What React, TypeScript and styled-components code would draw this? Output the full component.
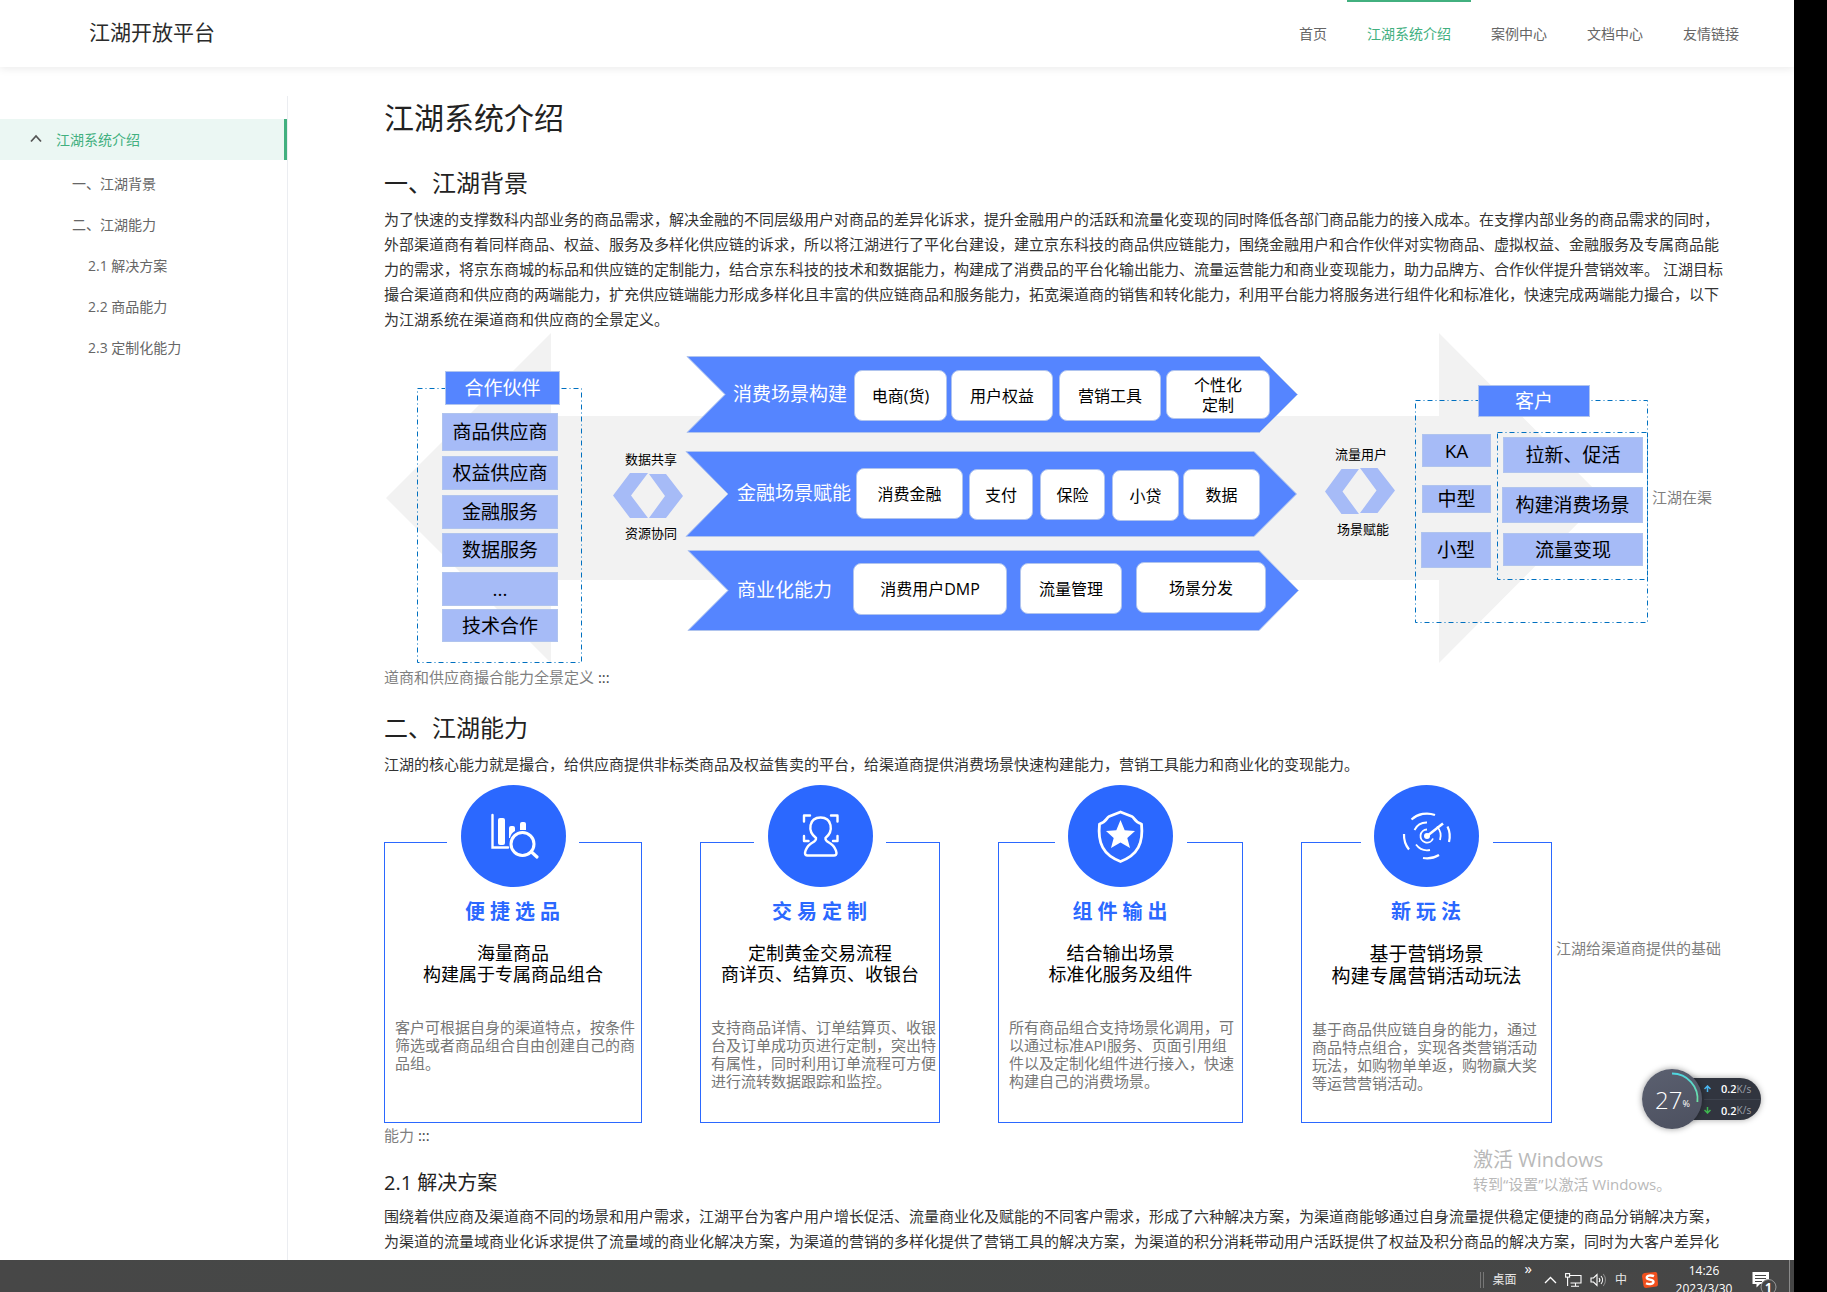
import React from 'react';
import styled, { createGlobalStyle, css } from 'styled-components';

const GREEN = '#42b07f';
const BLUE = '#5585ff';
const PALE = '#a6bbf7';
const EDGE = '#b0c4ee';
const BRAND = '#2b68ff';

const GlobalStyle = createGlobalStyle`
  * { box-sizing: border-box; }
  body {
    margin: 0;
    background: #000;
    font-family: "Open Sans", "Noto Sans CJK SC", sans-serif;
    color: #333;
  }
`;

/* ---------- page frame ---------- */

const Screen = styled.div`
  height: 100vh;
  margin-right: 33px;
  display: flex;
  flex-direction: column;
  overflow: hidden;
  position: relative;
  background: #fff;
`;

const Header = styled.header`
  flex: none;
  height: 67px;
  padding: 0 35px 0 89px;
  display: flex;
  justify-content: space-between;
  background: #fff;
  box-shadow: 0 2px 8px rgba(0, 0, 0, 0.08);
`;

const Brand = styled.a`
  font-size: 21px;
  line-height: 64px;
  color: #2b2b2b;
  text-decoration: none;
`;

const TopNav = styled.nav`
  display: flex;
`;

const TopLink = styled.a<{ $active?: boolean }>`
  padding: 0 20px;
  border-top: 2px solid ${(p) => (p.$active ? GREEN : 'transparent')};
  font-size: 14px;
  line-height: 64px;
  color: ${(p) => (p.$active ? GREEN : '#666')};
  text-decoration: none;
`;

const Body = styled.div`
  flex: 1;
  min-height: 0;
  display: flex;
`;

const Sidebar = styled.nav`
  flex: none;
  width: 288px;
  margin-top: 29px;
  padding-top: 23px;
  border-right: 1px solid #ebedf1;
`;

const SideLink = styled.a<{ $level: number }>`
  display: flex;
  align-items: center;
  height: 41px;
  padding-bottom: 2px;
  padding-left: ${(p) => 56 + p.$level * 16}px;
  font-size: 14px;
  color: #666;
  text-decoration: none;
`;

const SideActive = styled.a`
  display: flex;
  align-items: center;
  gap: 14px;
  height: 41px;
  margin-bottom: 3px;
  padding-bottom: 2px;
  padding-left: 30px;
  border-right: 3px solid ${GREEN};
  background: #ebf7f3;
  font-size: 14px;
  color: ${GREEN};
  text-decoration: none;
`;

const Content = styled.main`
  flex: 1;
  min-width: 0;
  padding: 31px 70px 0 96px;
  overflow: hidden;
`;

const H1 = styled.h1`
  margin: 0 0 28px;
  font-size: 30px;
  font-weight: 400;
  line-height: 40px;
  color: #222;
`;

const H2 = styled.h2`
  margin: 21px 0 7px;
  font-size: 24px;
  font-weight: 400;
  line-height: 34px;
  color: #222;
`;

const H3 = styled.h3`
  margin: 21px 0 7px;
  font-size: 20px;
  font-weight: 400;
  line-height: 28px;
  color: #222;
`;

const Text = styled.p<{ $muted?: boolean }>`
  margin: 0;
  font-size: 15px;
  line-height: 25px;
  color: ${(p) => (p.$muted ? '#7f7f7f' : '#333')};
`;

const Mark = styled.span`
  color: #444;
`;

/* ---------- panorama diagram ---------- */

const Canvas = styled.span`
  position: relative;
  display: inline-block;
  vertical-align: middle;
  width: 1264px;
  height: 333px;
  color: #000;
`;

const Shapes = styled.svg`
  display: block;
`;

interface Place {
  $x: number;
  $y: number;
  $w: number;
  $h: number;
}

const placed = css<Place>`
  position: absolute;
  left: ${(p) => p.$x}px;
  top: ${(p) => p.$y}px;
  width: ${(p) => p.$w}px;
  height: ${(p) => p.$h}px;
  display: flex;
  align-items: center;
  justify-content: center;
  text-align: center;
  white-space: nowrap;
`;

const Block = styled.span<Place & { $head?: boolean }>`
  ${placed}
  border: 1px solid ${EDGE};
  background: ${(p) => (p.$head ? BLUE : PALE)};
  color: ${(p) => (p.$head ? '#fff' : '#000')};
  font-size: 19px;
  line-height: 24px;
`;

const Chip = styled.span<Place>`
  ${placed}
  border: 1px solid ${EDGE};
  border-radius: 8px;
  background: #fff;
  font-size: 16px;
  line-height: 20px;
`;

const RibbonTitle = styled.span<Place>`
  ${placed}
  justify-content: flex-start;
  color: #fff;
  font-size: 19px;
`;

const Note = styled.span<Place>`
  ${placed}
  font-size: 13px;
`;

type Item = [React.ReactNode, number, number, number, number];

const heads: Item[] = [
  ['合作伙伴', 61, 39, 115, 34],
  ['客户', 1094, 53, 112, 32],
];

const blocks: Item[] = [
  ['商品供应商', 58, 81, 116, 38],
  ['权益供应商', 58, 124, 116, 34],
  ['金融服务', 58, 163, 116, 34],
  ['数据服务', 58, 201, 116, 34],
  ['...', 58, 240, 116, 34],
  ['技术合作', 58, 277, 116, 33],
  ['KA', 1038, 102, 69, 33],
  ['中型', 1038, 153, 69, 28],
  ['小型', 1037, 200, 70, 36],
  ['拉新、促活', 1119, 105, 140, 36],
  ['构建消费场景', 1118, 155, 141, 36],
  ['流量变现', 1119, 201, 140, 33],
];

const chips: Item[] = [
  ['电商(货)', 470, 38, 93, 51],
  ['用户权益', 567, 38, 102, 51],
  ['营销工具', 675, 38, 102, 51],
  [<>个性化<br />定制</>, 782, 38, 104, 49],
  ['消费金融', 472, 136, 107, 51],
  ['支付', 585, 137, 64, 51],
  ['保险', 656, 137, 65, 51],
  ['小贷', 728, 138, 67, 51],
  ['数据', 799, 137, 77, 51],
  ['消费用户DMP', 469, 231, 154, 52],
  ['流量管理', 636, 231, 102, 51],
  ['场景分发', 752, 230, 130, 51],
];

const titles: Item[] = [
  ['消费场景构建', 349, 50, 120, 24],
  ['金融场景赋能', 353, 149, 120, 24],
  ['商业化能力', 353, 246, 120, 24],
];

const notes: Item[] = [
  ['数据共享', 237, 117, 60, 20],
  ['资源协同', 237, 191, 60, 20],
  ['流量用户', 947, 112, 60, 20],
  ['场景赋能', 949, 187, 60, 20],
];

const draw = (Part: React.ElementType, items: Item[], extra: object = {}) =>
  items.map(([label, x, y, w, h], i) => (
    <Part key={i} $x={x} $y={y} $w={w} $h={h} {...extra}>
      <span>{label}</span>
    </Part>
  ));

const Panorama = () => (
  <Canvas>
    <Shapes width="1264" height="332" viewBox="0 0 1264 332" aria-hidden="true">
      <path
        d="M2 166 L167 1 V84 H1055 V1 L1219 166 L1055 331 V248 H167 V331 Z"
        fill="#f2f2f2"
      />
      <g fill="none" stroke="#0070c0" strokeDasharray="5 3 1 3">
        <rect x="33.5" y="56.5" width="164" height="274" />
        <rect x="1031.5" y="68.5" width="232" height="222" />
        <rect x="1113.5" y="100.5" width="150" height="147" />
      </g>
      <g fill={BLUE} stroke={EDGE}>
        <path d="M303 24.5 H875.5 L913.5 62.5 L875.5 100.5 H303 L341 62.5 Z" />
        <path d="M302 119.5 H870 L912.5 162 L870 204.5 H302 L344 162 Z" />
        <path d="M304 218.5 H875 L914.5 258.5 L875 298.5 H304 L344 258.5 Z" />
      </g>
      <g fill={PALE}>
        <path d="M229 163.5 L246 141 H264 L247 163.5 L264 186 H246 Z" />
        <path d="M265 142 H282 L299 164 L282 186 H265 L281 164 Z" />
        <path d="M941 159.5 L957.5 137 H975 L958.5 159.5 L975 182 H957.5 Z" />
        <path d="M976 136 H993.5 L1011 158.5 L993.5 181 H976 L992.5 158.5 Z" />
      </g>
    </Shapes>
    {draw(Block, heads, { $head: true })}
    {draw(Block, blocks)}
    {draw(RibbonTitle, titles)}
    {draw(Chip, chips)}
    {draw(Note, notes)}
  </Canvas>
);

/* ---------- ability cards ---------- */

const Cards = styled.span`
  display: inline-grid;
  grid-template-columns: 258px 240px 245px 251px;
  column-gap: 58px;
  vertical-align: middle;
  padding-top: 65px;
`;

const Card = styled.span`
  min-height: 281px;
  display: flex;
  flex-direction: column;
  align-items: center;
  border: 1px solid ${BRAND};
`;

const BadgeSlot = styled.span`
  width: 132px;
  margin-top: -58px;
  display: flex;
  justify-content: center;
  background: #fff;
`;

const Badge = styled.svg`
  display: block;
  width: 105px;
  height: 102px;
`;

const CardTitle = styled.strong`
  margin-top: 12px;
  padding-left: 4px;
  font-size: 20px;
  line-height: 26px;
  letter-spacing: 5px;
  color: ${BRAND};
`;

const CardLead = styled.span<{ $large?: boolean }>`
  margin-top: 18px;
  font-size: ${(p) => (p.$large ? 19 : 18)}px;
  line-height: ${(p) => (p.$large ? 22 : 21)}px;
  text-align: center;
  white-space: nowrap;
  color: #000;
`;

const CardText = styled.span`
  align-self: stretch;
  margin-top: 33px;
  padding: 0 2px 0 10px;
  font-size: 15px;
  line-height: 18px;
  color: #777;
`;

const ChartIcon = () => (
  <>
    <g fill="none" stroke="#fff" strokeWidth="2.4" strokeLinecap="round">
      <path d="M31.5 30 V62.5 H47" />
      <circle cx="61.5" cy="59" r="11.5" strokeWidth="3" />
      <path d="M70.5 67 L76 72" strokeWidth="3.2" />
    </g>
    <rect x="37" y="33" width="7" height="27" rx="2" fill="#fff" />
    <path d="M48 43 a2 2 0 0 1 2 -2 h2 a2 2 0 0 1 2 2 v3 q-4 2 -5 7 h-1 Z" fill="#fff" />
    <path d="M59 39 a2 2 0 0 1 2 -2 h2 a2 2 0 0 1 2 2 v6 h-6 Z" fill="#fff" />
  </>
);

const PersonIcon = () => (
  <g fill="none" stroke="#fff" strokeWidth="2.4" strokeLinecap="round" strokeLinejoin="round">
    <path d="M36 36.500 V30.500 H42" />
    <path d="M63 30.500 H69.500 V36.500" />
    <path d="M36 51 V56 H40.500" />
    <path d="M69.500 51 V56 H65" />
    <path d="M48 53 C39 46 41 32.500 52.600 32.500 C64 32.500 66 46 57.500 53 C57 56 60 57 62.500 58.500 C66 61 68 65 68.500 68 Q68.500 70.500 66 70.500 H39.500 Q37 70.500 37 68 C37.500 65 39.500 61 43 58.500 C45.500 57 48.500 56 48 53 Z" />
  </g>
);

const ShieldIcon = () => (
  <>
    <path
      d="M52.500 27 L64 31.500 C66.500 32.500 66 37 73.500 39 C75.500 58 70 70 52.500 76.500 C35 70 29.500 58 31.500 39 C39 37 38.500 32.500 41 31.500 Z"
      fill="none"
      stroke="#fff"
      strokeWidth="2.8"
      strokeLinejoin="round"
    />
    <path
      d="M52.500 35 L56.700 45.300 L67 46 L59.300 53 L62 63 L52.500 57.600 L43 63 L45.700 53 L38 46 L48.300 45.300 Z"
      fill="#fff"
    />
  </>
);

const RadarIcon = () => (
  <>
    <g fill="none" stroke="#fff" strokeWidth="2.2">
      <path d="M37.500 34.500 A23 23 0 0 1 61 30" />
      <path d="M73.500 41.500 A23 23 0 0 1 75 57" />
      <path d="M65 70 A23 23 0 0 1 49 73" />
      <path d="M30 49 A23 23 0 0 0 35 64.500" />
      <path d="M40.500 45 A13.500 13.500 0 0 1 53 37.500" strokeWidth="1.800" />
      <path d="M63 41.500 A14 14 0 0 1 66 55" strokeWidth="1.800" />
      <path d="M42 59.500 A14 14 0 0 0 56 65" strokeWidth="1.800" />
      <path d="M53 44.500 A6.500 6.500 0 1 0 59 53.500" strokeWidth="1.800" />
      <path d="M53 51 L69 38.500" strokeWidth="2.600" />
    </g>
    <circle cx="53" cy="51" r="3" fill="#fff" />
  </>
);

interface CardData {
  title: string;
  lead: [string, string];
  text: string;
  icon: React.ReactNode;
  large?: boolean;
}

const cards: CardData[] = [
  {
    title: '便捷选品',
    lead: ['海量商品', '构建属于专属商品组合'],
    text: '客户可根据自身的渠道特点，按条件筛选或者商品组合自由创建自己的商品组。',
    icon: <ChartIcon />,
  },
  {
    title: '交易定制',
    lead: ['定制黄金交易流程', '商详页、结算页、收银台'],
    text: '支持商品详情、订单结算页、收银台及订单成功页进行定制，突出特有属性，同时利用订单流程可方便进行流转数据跟踪和监控。',
    icon: <PersonIcon />,
  },
  {
    title: '组件输出',
    lead: ['结合输出场景', '标准化服务及组件'],
    text: '所有商品组合支持场景化调用，可以通过标准API服务、页面引用组件以及定制化组件进行接入，快速构建自己的消费场景。',
    icon: <ShieldIcon />,
  },
  {
    title: '新玩法',
    lead: ['基于营销场景', '构建专属营销活动玩法'],
    text: '基于商品供应链自身的能力，通过商品特点组合，实现各类营销活动玩法，如购物单单返，购物赢大奖等运营营销活动。',
    icon: <RadarIcon />,
    large: true,
  },
];

const Abilities = () => (
  <Cards>
    {cards.map((c) => (
      <Card key={c.title}>
        <BadgeSlot>
          <Badge viewBox="0 0 105 102" aria-hidden="true">
            <ellipse cx="52.5" cy="51" rx="52.5" ry="51" fill={BRAND} />
            {c.icon}
          </Badge>
        </BadgeSlot>
        <CardTitle>{c.title}</CardTitle>
        <CardLead $large={c.large}>
          {c.lead[0]}
          <br />
          {c.lead[1]}
        </CardLead>
        <CardText>{c.text}</CardText>
      </Card>
    ))}
  </Cards>
);

/* ---------- desktop overlays ---------- */

const Monitor = styled.aside`
  position: absolute;
  right: 33px;
  bottom: 163px;
  display: flex;
  align-items: center;
`;

const Gauge = styled.div`
  position: relative;
  z-index: 1;
  width: 60px;
  height: 60px;
  padding-left: 13px;
  display: flex;
  align-items: center;
  border-radius: 50%;
  background: linear-gradient(160deg, #5b6070, #4c505f);
  box-shadow: 0 0 6px rgba(0, 0, 0, 0.4);
  color: #fff;
  font-size: 24px;
  font-weight: 300;
`;

const Percent = styled.small`
  align-self: flex-end;
  margin-bottom: 18px;
  font-size: 9px;
  line-height: 14px;
  font-weight: 400;
`;

const Arc = styled.svg`
  position: absolute;
  inset: 0;
`;

const Rates = styled.div`
  width: 72px;
  height: 42px;
  margin-left: -13px;
  padding-left: 15px;
  border-radius: 0 21px 21px 0;
  background: #31353f;
  box-shadow: 0 0 6px rgba(0, 0, 0, 0.35);
`;

const Rate = styled.div`
  display: flex;
  align-items: center;
  height: 21px;
  color: #fff;
  font-size: 11px;
  font-weight: 600;

  & + & {
    border-top: 1px solid #3e434e;
  }

  svg {
    margin-right: 10px;
  }

  small {
    font-size: 10px;
    font-weight: 400;
    color: #9da1ab;
  }
`;

const Watermark = styled.div`
  position: absolute;
  right: 124px;
  bottom: 97px;
  width: 197px;
  color: #b9b9b9;
  white-space: nowrap;
`;

const WatermarkTitle = styled.div`
  font-size: 20px;
  line-height: 26px;
`;

const WatermarkText = styled.div`
  font-size: 15px;
  line-height: 22px;
`;

/* The bar runs on past the lower edge of the screen. */
const Taskbar = styled.footer`
  flex: none;
  height: 40px;
  margin-bottom: -8px;
  padding-right: 4px;
  position: relative;
  display: flex;
  justify-content: flex-end;
  align-items: center;
  background: linear-gradient(90deg, #474747, #454847 40%, #464646);
  color: #fff;
  font-size: 12px;
`;

const Grip = styled.span`
  width: 4px;
  height: 16px;
  margin-right: 9px;
  border: solid #777;
  border-width: 0 1px;
`;

const TrayLabel = styled.span`
  line-height: 16px;
  color: #e6e6e6;
`;

const More = styled.span`
  align-self: flex-start;
  margin: 0 12px 0 8px;
  font-size: 15px;
  line-height: 16px;
`;

const Tray = styled.div`
  display: flex;
  align-items: center;
  gap: 8px;
  margin-right: 15px;
`;

const Clock = styled.time`
  align-self: flex-start;
  width: 60px;
  margin: 2px 18px 0 16px;
  display: flex;
  flex-direction: column;
  align-items: center;
  line-height: 18px;
`;

const ShowDesktop = styled.span`
  align-self: stretch;
  width: 1px;
  margin-left: 12px;
  background: #8a8a8a;
`;

const RateArrow = ({ color, down }: { color: string; down?: boolean }) => (
  <svg width="7" height="7" viewBox="0 0 7 7" fill="none" stroke={color} strokeWidth="1.5">
    <path d={down ? 'M3.5 0 V6 M0.500 3 L3.500 6 L6.500 3' : 'M3.5 7 V1 M0.500 4 L3.500 1 L6.500 4'} />
  </svg>
);

const SpeedMonitor = () => (
  <Monitor>
    <Gauge>
      27<Percent>%</Percent>
      <Arc width="60" height="60" viewBox="0 0 60 60" fill="none" aria-hidden="true">
        <defs>
          <linearGradient id="arc" x1="0" y1="0" x2="0" y2="1">
            <stop offset="0" stopColor="#4fd6e0" />
            <stop offset="1" stopColor="#6fe0a0" />
          </linearGradient>
        </defs>
        <path d="M30 4.500 A25.500 25.500 0 0 1 55.400 33" stroke="url(#arc)" strokeWidth="1.800" />
      </Arc>
    </Gauge>
    <Rates>
      <Rate>
        <RateArrow color="#4bb6f0" />
        0.2<small>K/s</small>
      </Rate>
      <Rate>
        <RateArrow color="#3fb950" down />
        0.2<small>K/s</small>
      </Rate>
    </Rates>
  </Monitor>
);

const SystemBar = () => (
  <Taskbar>
    <Grip />
    <TrayLabel>桌面</TrayLabel>
    <More>»</More>
    <Tray>
      <svg width="13" height="8" viewBox="0 0 13 8" fill="none" stroke="#fff" strokeWidth="1.3">
        <path d="M1 7 L6.500 1.500 L12 7" />
      </svg>
      <svg width="17" height="14" viewBox="0 0 17 14" fill="none" stroke="#fff" strokeWidth="1.1">
        <path d="M5 2.500 H16 V10 H5.500 M10.500 10 V13 M6 13.200 H14" />
        <rect x="0.600" y="0.600" width="4" height="3.500" />
        <path d="M2.600 4 V13" />
      </svg>
      <svg width="17" height="14" viewBox="0 0 17 14" fill="none" stroke="#fff" strokeWidth="1.1">
        <path d="M1 5 H3.500 L7 1.500 V12.500 L3.500 9 H1 Z" />
        <path d="M9 5 A3 3 0 0 1 9 9 M11 3 A6 6 0 0 1 11 11" />
        <path d="M13.200 1 A9 9 0 0 1 13.200 13" stroke="#8a8a8a" />
      </svg>
      <TrayLabel>中</TrayLabel>
    </Tray>
    <svg width="16" height="16" viewBox="0 0 16 16" aria-hidden="true">
      <path d="M2.500 1 L13.500 0 Q15 0 15.200 1.500 L16 12 Q16 14 14.500 14.500 L4 16 Q2 16 1.500 14 L0 4 Q0 1.500 2.500 1 Z" fill="#f0501e" />
      <path d="M12 4.200 C9 2.800 4.500 3.400 4.800 5.800 C5 8 11.500 7.300 11.500 9.800 C11.500 12.500 6.500 12.600 4 11.300" fill="none" stroke="#fff" strokeWidth="2.400" />
    </svg>
    <Clock>
      <span>14:26</span>
      <span>2023/3/30</span>
    </Clock>
    <svg width="25" height="24" viewBox="0 0 25 24" aria-hidden="true">
      <path d="M0.500 4 H17 V16 H8 L4.500 19.500 V16 H0.500 Z" fill="#fff" />
      <path d="M3 7.500 H14 M3 10.500 H14 M3 13.500 H10" stroke="#464646" />
      <circle cx="16.500" cy="19" r="7.500" fill="#464646" stroke="#999" />
      <text x="16.500" y="23.500" textAnchor="middle" fontSize="12" fontWeight="700" fill="#fff">1</text>
    </svg>
    <ShowDesktop />
  </Taskbar>
);

/* ---------- page ---------- */

const topLinks = ['首页', '江湖系统介绍', '案例中心', '文档中心', '友情链接'];

const sideLinks: [string, number][] = [
  ['一、江湖背景', 1],
  ['二、江湖能力', 1],
  ['2.1 解决方案', 2],
  ['2.2 商品能力', 2],
  ['2.3 定制化能力', 2],
];

export default function App() {
  return (
    <>
      <GlobalStyle />
      <Screen>
        <Header>
          <Brand href="#">江湖开放平台</Brand>
          <TopNav>
            {topLinks.map((label, i) => (
              <TopLink key={label} href="#" $active={i === 1}>
                {label}
              </TopLink>
            ))}
          </TopNav>
        </Header>
        <Body>
          <Sidebar>
            <SideActive href="#">
              <svg width="12" height="9" viewBox="0 0 12 9" fill="none" stroke="#555" strokeWidth="1.8">
                <path d="M1 7.500 L6 2 L11 7.500" />
              </svg>
              江湖系统介绍
            </SideActive>
            {sideLinks.map(([label, level]) => (
              <SideLink key={label} href="#" $level={level}>
                {label}
              </SideLink>
            ))}
          </Sidebar>
          <Content>
            <H1>江湖系统介绍</H1>
            <H2>一、江湖背景</H2>
            <Text>
              为了快速的支撑数科内部业务的商品需求，解决金融的不同层级用户对商品的差异化诉求，提升金融用户的活跃和流量化变现的同时降低各部门商品能力的接入成本。在支撑内部业务的商品需求的同时，外部渠道商有着同样商品、权益、服务及多样化供应链的诉求，所以将江湖进行了平化台建设，建立京东科技的商品供应链能力，围绕金融用户和合作伙伴对实物商品、虚拟权益、金融服务及专属商品能力的需求，将京东商城的标品和供应链的定制能力，结合京东科技的技术和数据能力，构建成了消费品的平台化输出能力、流量运营能力和商业变现能力，助力品牌方、合作伙伴提升营销效率。 江湖目标撮合渠道商和供应商的两端能力，扩充供应链端能力形成多样化且丰富的供应链商品和服务能力，拓宽渠道商的销售和转化能力，利用平台能力将服务进行组件化和标准化，快速完成两端能力撮合，以下为江湖系统在渠道商和供应商的全景定义。
            </Text>
            <Text as="div" $muted>
              <Panorama /> <span>江湖在渠</span>
              <span>道商和供应商撮合能力全景定义</span> <Mark>:::</Mark>
            </Text>
            <H2>二、江湖能力</H2>
            <Text>
              江湖的核心能力就是撮合，给供应商提供非标类商品及权益售卖的平台，给渠道商提供消费场景快速构建能力，营销工具能力和商业化的变现能力。
            </Text>
            <Text as="div" $muted>
              <Abilities /> <span>江湖给渠道商提供的基础</span>
              <span>能力</span> <Mark>:::</Mark>
            </Text>
            <H3>2.1 解决方案</H3>
            <Text>
              围绕着供应商及渠道商不同的场景和用户需求，江湖平台为客户用户增长促活、流量商业化及赋能的不同客户需求，形成了六种解决方案，为渠道商能够通过自身流量提供稳定便捷的商品分销解决方案，为渠道的流量域商业化诉求提供了流量域的商业化解决方案，为渠道的营销的多样化提供了营销工具的解决方案，为渠道的积分消耗带动用户活跃提供了权益及积分商品的解决方案，同时为大客户差异化
            </Text>
          </Content>
        </Body>
        <SystemBar />
        <Watermark>
          <WatermarkTitle>激活 Windows</WatermarkTitle>
          <WatermarkText>转到“设置”以激活 Windows。</WatermarkText>
        </Watermark>
        <SpeedMonitor />
      </Screen>
    </>
  );
}
